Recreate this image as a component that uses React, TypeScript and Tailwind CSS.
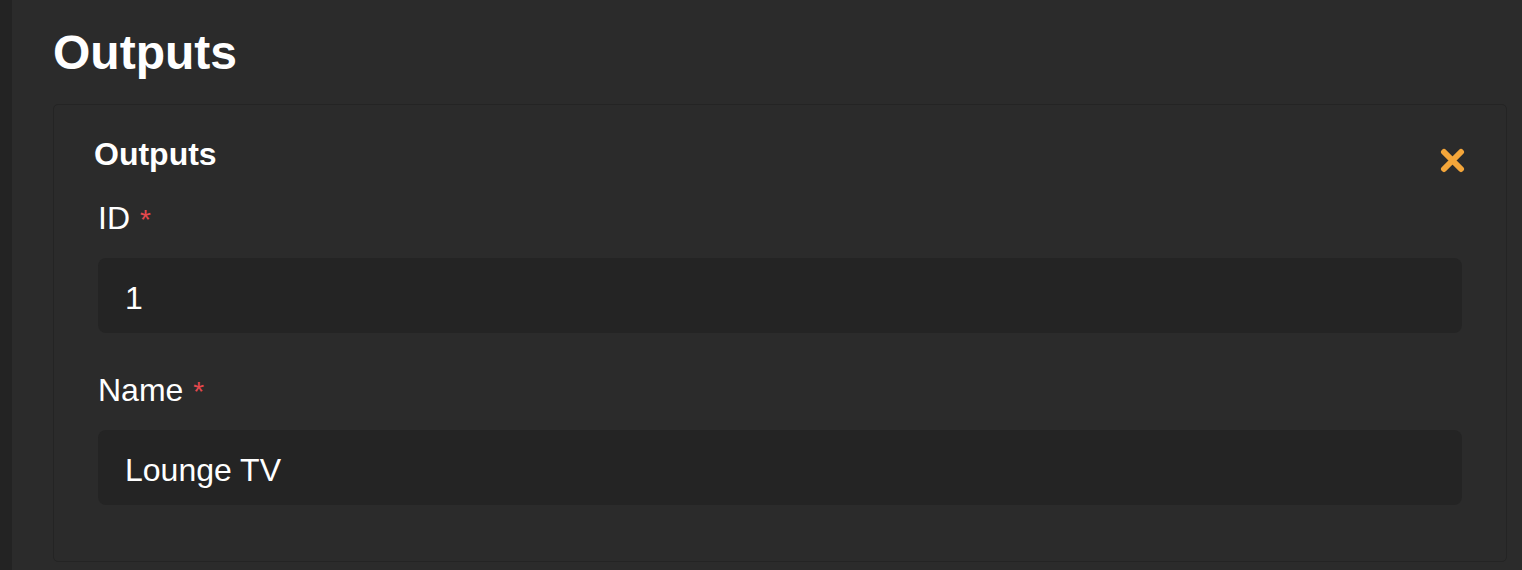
const fields = [
    { id: "id", label: "ID", value: "1" },
    { id: "name", label: "Name", value: "Lounge TV" },
];

function CloseIcon() {
    return (
        <svg width="25" height="25" viewBox="0 0 25 25" className="shrink-0">
            <path d="M4 4 L21 21 M21 4 L4 21" stroke="#f4a63a" strokeWidth="6" strokeLinecap="round" />
        </svg>
    );
}

export default function App() {
    return (
        <div
            className="flex h-[570px] w-full overflow-hidden bg-[#2b2b2b] text-white"
            style={{ fontFamily: '"Liberation Sans", Arial, sans-serif' }}
        >
            <div className="w-[12px] shrink-0 bg-[#232323]" />

            <main className="flex-1 pl-[41px] pr-[15px] pt-[25px]">
                <h1 className="mb-[23px] text-[48px] font-bold leading-[56px]">Outputs</h1>

                <section className="rounded-[5px] border border-[#242424] bg-[#2b2b2b] px-[44px] pb-[56px] pt-[29px]">
                    <div className="flex items-start justify-between">
                        <h2 className="-ml-[4px] text-[32px] font-bold leading-[40px]">Outputs</h2>
                        <button className="-mr-[3px] mt-[14px]">
                            <CloseIcon />
                        </button>
                    </div>

                    <div className="mt-[24px] flex flex-col gap-[37px]">
                        {fields.map((field) => (
                            <div key={field.id} className="flex flex-col gap-[20px]">
                                <label className="h-[40px] text-[32px] leading-[40px]">
                                    {field.label}
                                    <span className="ml-[10px] text-[28px] leading-none text-[#e5484d]">*</span>
                                </label>
                                <div className="h-[75px] rounded-[8px] bg-[#242424] pl-[27px] pt-[20px] text-[32px] leading-[40px]">
                                    {field.value}
                                </div>
                            </div>
                        ))}
                    </div>
                </section>
            </main>
        </div>
    );
}
